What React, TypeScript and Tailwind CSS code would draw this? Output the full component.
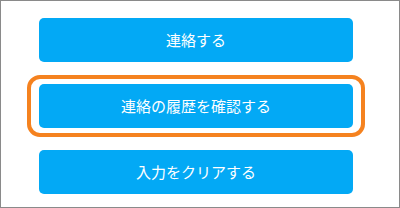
const buttonClass =
  'flex h-[44px] w-[314px] items-center justify-center rounded-[5px] bg-[#03a9f5] text-[15px] text-white';

export default function App() {
  return (
    <div
      className="flex h-[208px] w-[400px] flex-col items-start border border-[#8a8a8a] bg-white pl-[26px] pt-[17px]"
      style={{ fontFamily: '"Noto Sans CJK JP", "Noto Sans", sans-serif' }}
    >
      <div className="ml-[12px]">
        <button className={buttonClass}>連絡する</button>
      </div>

      {/* ハイライト枠 */}
      <div className="mt-[13px] rounded-[13px] border-4 border-[#f5821f] px-[8px] py-[5px]">
        <button className={buttonClass}>連絡の履歴を確認する</button>
      </div>

      <div className="ml-[12px] mt-[13px]">
        <button className={buttonClass}>入力をクリアする</button>
      </div>
    </div>
  );
}
